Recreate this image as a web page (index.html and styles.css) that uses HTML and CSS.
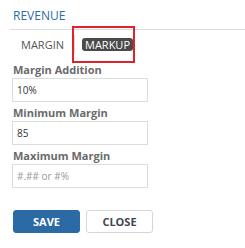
FILE: index.html
```html
<!DOCTYPE html>
<html>
<head>
    <title>Revenue</title>
    <link rel="stylesheet" href="styles.css">
</head>
<body>
    <div class="panel">
        <h3 class="titulo">REVENUE</h3>
        <div class="tabs">
            <span class="tab">MARGIN</span>
            <span class="sep"></span>
            <span class="tab activo">MARKUP</span>
            <span class="marca"></span>
        </div>
        <div class="form-group">
            <label for="adicion">Margin Addition</label>
            <input type="text" id="adicion" value="10%">
        </div>
        <div class="form-group">
            <label for="minimo">Minimum Margin</label>
            <input type="text" id="minimo" value="85">
        </div>
        <div class="form-group">
            <label for="maximo">Maximum Margin</label>
            <input type="text" id="maximo" placeholder="#.## or #%">
        </div>
        <div class="botones">
            <button class="btnAzul">SAVE</button>
            <button class="btnBlanco">CLOSE</button>
        </div>
    </div>
</body>
</html>
```

FILE: styles.css
```css
* {
    box-sizing: border-box;
}

body {
    margin: 0;
    padding: 0;
    font-family: "Open Sans", Arial, sans-serif;
    background: #fff;
}

.panel {
    padding: 7px 0 0 10px;
}

.titulo {
    margin: 0;
    padding: 0 0 5px 3px;
    font-size: 12px;
    font-weight: normal;
    color: #2f6aa7;
    border-bottom: 1px solid #dcdcdc;
    line-height: 17px;
}

.tabs {
    position: relative;
    display: flex;
    align-items: center;
    height: 26px;
    margin-top: 1px;
    margin-bottom: 6px;
    padding-left: 11px;
}

.tab {
    font-size: 11px;
    color: #555;
    line-height: 13px;
}

.sep {
    width: 1px;
    height: 19px;
    background: #d8d8d8;
    margin: 0 7px 0 10px;
}

.activo {
    background: #4a4a4a;
    color: #fff;
    border-radius: 3px;
    padding: 0 3px;
}

.marca {
    position: absolute;
    left: 62px;
    top: -5px;
    width: 63px;
    height: 37px;
    border: 2px solid #e0232b;
}

.form-group {
    margin: 0 0 4px 0;
}

.form-group label {
    display: block;
    font-size: 11px;
    font-weight: bold;
    color: #6a6a6a;
    line-height: 13px;
    margin: 0 0 2px 3px;
}

.form-group input[type="text"] {
    display: block;
    width: 136px;
    height: 24px;
    margin-left: 2px;
    padding: 0 4px;
    border: 1px solid #dcdcdc;
    font-family: "Open Sans", Arial, sans-serif;
    font-size: 10px;
    color: #333;
    outline: none;
}

.form-group input::placeholder {
    color: #999;
}

.botones {
    display: flex;
    gap: 6px;
    margin-top: 22px;
    padding-left: 3px;
}

.botones button {
    width: 67px;
    height: 23px;
    border-radius: 3px;
    font-family: "Open Sans", Arial, sans-serif;
    font-size: 11px;
    font-weight: bold;
    padding: 0;
}

.btnAzul {
    background-color: #2b6aa4;
    border: 1px solid #2b6aa4;
    color: white;
}

.btnBlanco {
    background-color: white;
    border: 1px solid #d6d6d6;
    color: #3f4651;
}
```
